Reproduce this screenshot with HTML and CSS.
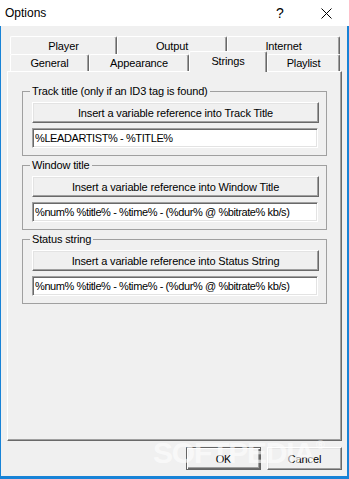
FILE: index.html
```html
<!DOCTYPE html>
<html>
<head>
    <meta charset="UTF-8">
    <title>Options</title>
    <link rel="stylesheet" href="styles.css">
</head>
<body>
    <div class="window">
        <div class="titlebar">
            <span class="title">Options</span>
            <span class="caption-btn help">?</span>
            <span class="caption-btn close">
                <svg width="11" height="11" viewBox="0 0 11 11">
                    <path d="M0.5 0.5 L10.5 10.5 M10.5 0.5 L0.5 10.5" stroke="#000" stroke-width="1" fill="none"/>
                </svg>
            </span>
        </div>

        <div class="client">
            <div class="tabs">
                <div class="tab-row row-top">
                    <div class="tab tab-player">Player</div>
                    <div class="tab tab-output">Output</div>
                    <div class="tab tab-internet">Internet</div>
                </div>
                <div class="tab-row row-bottom">
                    <div class="tab tab-general">General</div>
                    <div class="tab tab-appearance">Appearance</div>
                    <div class="tab tab-strings selected">Strings</div>
                    <div class="tab tab-playlist">Playlist</div>
                </div>
            </div>

            <div class="panel">
                <fieldset class="group">
                    <legend>Track title (only if an ID3 tag is found)</legend>
                    <button class="btn wide">Insert a variable reference into Track Title</button>
                    <input class="edit" type="text" value="%LEADARTIST% - %TITLE%">
                </fieldset>

                <fieldset class="group">
                    <legend>Window title</legend>
                    <button class="btn wide">Insert a variable reference into Window Title</button>
                    <input class="edit" type="text" value="%num% %title% - %time% - (%dur% @ %bitrate% kb/s)">
                </fieldset>

                <fieldset class="group">
                    <legend>Status string</legend>
                    <button class="btn wide">Insert a variable reference into Status String</button>
                    <input class="edit" type="text" value="%num% %title% - %time% - (%dur% @ %bitrate% kb/s)">
                </fieldset>
            </div>

            <div class="actions">
                <button class="btn action default">OK</button>
                <button class="btn action">Cancel</button>
            </div>

            <div class="watermark">SOFTPEDIA<span class="reg">®</span></div>
        </div>
    </div>
</body>
</html>
```

FILE: styles.css
```css
* {
    box-sizing: border-box;
}

body {
    margin: 0;
    font-family: "Liberation Sans", Arial, sans-serif;
    font-size: 11px;
    color: #000;
    background: #f0f0f0;
}

.window {
    width: 349px;
    height: 479px;
    display: flex;
    flex-direction: column;
}

/* Title bar */
.titlebar {
    height: 26px;
    background: #fff;
    display: flex;
    align-items: center;
    padding-left: 5px;
    font-size: 12px;
}

.title {
    flex: 1;
}

.caption-btn {
    width: 46px;
    height: 26px;
    display: flex;
    align-items: center;
    justify-content: center;
}

.help {
    font-size: 14px;
}

/* Client area */
.client {
    flex: 1;
    position: relative;
    display: flex;
    flex-direction: column;
    border: solid #1883d7;
    border-width: 0 2px 3px 1px;
    padding: 10px 5px 0 6px;
    letter-spacing: -0.15px;
}

/* Tabs */
.tabs {
    margin: 0 2px 0 3px;
}

.tab-row {
    display: flex;
}

.row-top {
    height: 18px;
}

.row-bottom {
    height: 17px;
}

.tab {
    display: flex;
    align-items: center;
    justify-content: center;
    background: #f0f0f0;
    border-left: 1px solid #fff;
    border-top: 1px solid #fff;
    border-right: 1px solid #696969;
    border-radius: 2px 2px 0 0;
    box-shadow: inset -1px 0 #a0a0a0;
}

.tab-player { width: 107px; }
.tab-output { width: 110px; }
.tab-internet { width: 113px; }
.tab-general { width: 79px; }
.tab-appearance { width: 100px; }
.tab-strings { width: 78px; }
.tab-playlist { width: 73px; }

.tab.selected {
    position: relative;
    z-index: 1;
    height: 21px;
    margin-top: -3px;
    padding-bottom: 3px;
}

/* Page panel */
.panel {
    height: 370px;
    border-left: 1px solid #fff;
    border-top: 1px solid #fff;
    border-right: 1px solid #696969;
    border-bottom: 1px solid #696969;
    box-shadow: inset -1px -1px #a0a0a0;
    padding: 12px 14px 0 14px;
}

.group {
    margin: 0 0 2px 0;
    padding: 0 7px 7px 9px;
    border: 1px solid #a0a0a0;
    min-width: 0;
}

.group legend {
    padding: 0 2px;
    margin-left: -2px;
    line-height: 14px;
}

/* Controls */
.btn {
    font: inherit;
    letter-spacing: inherit;
    color: #000;
    background: #f0f0f0;
    padding: 0;
    border: 1px solid;
    border-color: #fff #696969 #696969 #fff;
    box-shadow: inset -1px -1px #a0a0a0, inset 1px 1px #e3e3e3;
}

.wide {
    display: block;
    width: 287px;
    height: 21px;
    margin-top: 4px;
}

.edit {
    display: block;
    width: 286px;
    height: 20px;
    margin-top: 5px;
    padding: 0 2px;
    font: inherit;
    letter-spacing: -0.4px;
    color: #000;
    background: #fff;
    border: 1px solid;
    border-color: #a0a0a0 #fff #fff #a0a0a0;
    box-shadow: inset 1px 1px #696969, inset -1px -1px #e3e3e3;
    outline: none;
}

.actions {
    display: flex;
    justify-content: flex-end;
    gap: 6px;
    margin-top: 6px;
}

.action {
    width: 75px;
    height: 23px;
}

.action.default {
    border: 1px solid #646464;
    box-shadow: inset 1px 1px #fff, inset -1px -1px #696969, inset -2px -2px #a0a0a0;
}

/* Watermark over the dialog */
.watermark {
    position: absolute;
    left: 152px;
    bottom: 6px;
    font-size: 30px;
    font-weight: bold;
    letter-spacing: -1.2px;
    color: rgba(255, 255, 255, 0.6);
    pointer-events: none;
}

.watermark .reg {
    font-size: 12px;
    vertical-align: 14px;
    margin-left: 2px;
}
```
